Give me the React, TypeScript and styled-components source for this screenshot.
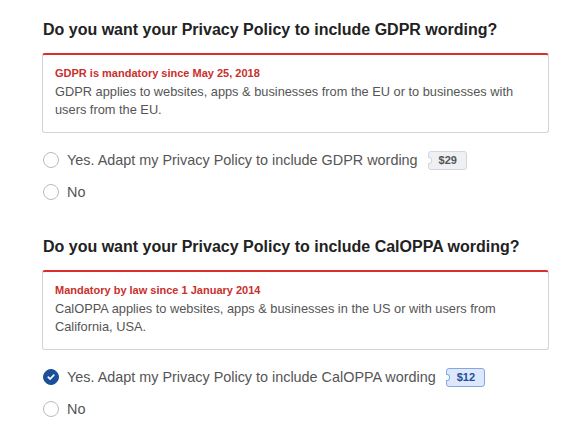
import React from "react";
import styled, { createGlobalStyle } from "styled-components";

const Global = createGlobalStyle`
  html, body { margin: 0; padding: 0; background: #fff; }
  body { font-family: "Liberation Sans", Arial, sans-serif; }
`;

const Page = styled.div`
  padding: 19px 32px 0 42px;
  display: flex;
  flex-direction: column;
`;

const Section = styled.section`
  display: flex;
  flex-direction: column;
  margin-bottom: 28px;
`;

const Heading = styled.h2`
  margin: 0 0 12px 1px;
  font-size: 16px;
  font-weight: bold;
  color: #222;
  line-height: 22px;
`;

const Notice = styled.div`
  border: 1px solid #d4d4d4;
  border-top: 2px solid #d9302c;
  border-radius: 3px;
  padding: 10px 12px 13px 12px;
  margin-bottom: 11px;
`;

const NoticeTitle = styled.div`
  color: #c9302c;
  font-size: 11px;
  font-weight: bold;
  line-height: 16px;
  margin-bottom: 2px;
`;

const NoticeText = styled.div`
  color: #555;
  font-size: 12.8px;
  line-height: 18px;
`;

const Option = styled.label`
  display: flex;
  align-items: center;
  height: 32px;
  color: #555;
  font-size: 14.4px;
  cursor: pointer;
`;

const Radio = styled.span<{ $checked?: boolean }>`
  box-sizing: border-box;
  width: 16px;
  height: 16px;
  border-radius: 50%;
  border: 1px solid ${(p) => (p.$checked ? "#1b4f9a" : "#b8bcc2")};
  background: ${(p) => (p.$checked ? "#1b4f9a" : "#fff")};
  margin: 0 8px 0 1px;
  display: flex;
  align-items: center;
  justify-content: center;
  flex-shrink: 0;
`;

const Badge = styled.span<{ $active?: boolean }>`
  position: relative;
  margin-left: 10px;
  padding: 0 9px 0 10px;
  height: 17px;
  line-height: 17px;
  font-size: 11px;
  font-weight: bold;
  border-radius: 3px;
  border: 1px solid ${(p) => (p.$active ? "#86a6e3" : "#d3d6da")};
  background: ${(p) => (p.$active ? "#dde8fc" : "#eef0f3")};
  color: ${(p) => (p.$active ? "#1d4f9e" : "#555")};

  &::before {
    content: "";
    position: absolute;
    left: -1px;
    top: 5px;
    width: 3px;
    height: 5px;
    background: #fff;
    border: 1px solid ${(p) => (p.$active ? "#86a6e3" : "#d3d6da")};
    border-left: none;
    border-radius: 0 3px 3px 0;
  }
`;

const Check = () => (
  <svg width="10" height="10" viewBox="0 0 10 10">
    <path d="M2.2 5.2 L4.2 7 L7.8 3.2" fill="none" stroke="#fff" strokeWidth="1.7" strokeLinecap="round" strokeLinejoin="round" />
  </svg>
);

type Q = {
  title: string;
  noticeTitle: string;
  noticeText: string;
  yes: string;
  price: string;
  checked: boolean;
};

const questions: Q[] = [
  {
    title: "Do you want your Privacy Policy to include GDPR wording?",
    noticeTitle: "GDPR is mandatory since May 25, 2018",
    noticeText: "GDPR applies to websites, apps & businesses from the EU or to businesses with users from the EU.",
    yes: "Yes. Adapt my Privacy Policy to include GDPR wording",
    price: "$29",
    checked: false,
  },
  {
    title: "Do you want your Privacy Policy to include CalOPPA wording?",
    noticeTitle: "Mandatory by law since 1 January 2014",
    noticeText: "CalOPPA applies to websites, apps & businesses in the US or with users from California, USA.",
    yes: "Yes. Adapt my Privacy Policy to include CalOPPA wording",
    price: "$12",
    checked: true,
  },
];

export default function App() {
  return (
    <>
      <Global />
      <Page>
        {questions.map((q) => (
          <Section key={q.title}>
            <Heading>{q.title}</Heading>
            <Notice>
              <NoticeTitle>{q.noticeTitle}</NoticeTitle>
              <NoticeText>{q.noticeText}</NoticeText>
            </Notice>
            <Option>
              <Radio $checked={q.checked}>{q.checked && <Check />}</Radio>
              {q.yes}
              <Badge $active={q.checked}>{q.price}</Badge>
            </Option>
            <Option>
              <Radio />
              No
            </Option>
          </Section>
        ))}
      </Page>
    </>
  );
}
